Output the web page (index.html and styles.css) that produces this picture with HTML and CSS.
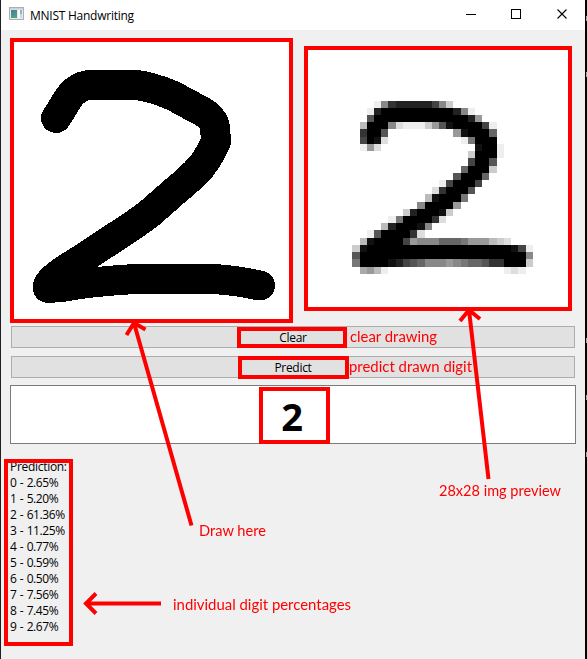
FILE: index.html
```
<!DOCTYPE html>
<html lang="en">
<head>
<meta charset="utf-8">
<title>MNIST Handwriting</title>
<link rel="stylesheet" href="styles.css">
</head>
<body>
<div class="window">
  <header class="titlebar">
    <svg class="app-icon" width="15" height="13" viewBox="0 0 15 13">
      <defs><linearGradient id="g" x2="0.4" y2="1"><stop offset="0" stop-color="#4a7aa5"/><stop offset="1" stop-color="#4fa37c"/></linearGradient></defs>
      <rect x=".5" y=".5" width="14" height="12" fill="#e8ebee" stroke="#a9afb5"/>
      <rect x="1" y="1" width="13" height="1.5" fill="#c9d0d6"/>
      <rect x="2" y="3" width="6" height="8" fill="url(#g)"/>
      <rect x="9" y="3" width="2" height="8" fill="#f9fafa"/>
      <rect x="11" y="3" width="2" height="4" fill="#8fb5b5"/>
      <rect x="11" y="7" width="2" height="4" fill="#c9dcda"/>
    </svg>
    <span class="title">MNIST Handwriting</span>
    <svg class="controls" width="119" height="30" viewBox="0 0 119 30" fill="none" stroke="#000">
      <path d="M0 14.5h10M45.500 9.500h9v9h-9z" shape-rendering="crispEdges"/>
      <path d="M91.500 9.500l9 9M100.500 9.500l-9 9" stroke-width="1.1"/>
    </svg>
  </header>
  <main class="content">
    <div class="images">
      <div class="pad">
        <svg width="275" height="277" viewBox="14 42 275 277" fill="none" stroke="#000" stroke-width="30" stroke-linecap="round" stroke-linejoin="round" shape-rendering="crispEdges">
          <path d="M56 118C64 107 67 97 75 91Q83 85 90 85H136L143 86Q165 91 179 99L203 112Q214 119 215 128L216 141Q211 154 201 167Q190 179 175 191L150 213Q142 219 135 224L82 259Q62 271 54 278Q47 284 48 288L62 287L80 284Q110 280 148 278.500H180L215 279L235 281L247 283L260 285.500"/>
        </svg>
      </div>
      <div class="preview"><canvas id="preview" width="260" height="257"></canvas></div>
    </div>
    <button class="btn">Clear</button>
    <button class="btn predict">Predict</button>
    <div class="result">2</div>
    <div class="scores">
      <div>Prediction:</div>
      <div>0 - 2.65%</div>
      <div>1 - 5.20%</div>
      <div>2 - 61.36%</div>
      <div>3 - 11.25%</div>
      <div>4 - 0.77%</div>
      <div>5 - 0.59%</div>
      <div>6 - 0.50%</div>
      <div>7 - 7.56%</div>
      <div>8 - 7.45%</div>
      <div>9 - 2.67%</div>
    </div>
  </main>
</div>
<svg class="annotations" width="587" height="659" viewBox="0 0 587 659">
  <g class="marks">
    <rect x="239" y="329" width="106" height="17"/>
    <rect x="240" y="358" width="107" height="19"/>
    <rect x="261" y="389" width="67" height="53"/>
    <rect x="6" y="461" width="65" height="183"/>
    <path d="M191.500 525.500L134 323M126.500 335L134 323L145.500 329.500"/>
    <path d="M488.500 479L469 310M460 321L469 310L480 319"/>
    <path d="M161 603.500H86M96 593.500L86 603.500L96 613.500"/>
  </g>
  <g class="notes">
    <text x="350" y="342" textLength="87" lengthAdjust="spacingAndGlyphs">clear drawing</text>
    <text x="349" y="372" textLength="123" lengthAdjust="spacingAndGlyphs">predict drawn digit</text>
    <text x="439" y="496" textLength="122" lengthAdjust="spacingAndGlyphs">28x28 img preview</text>
    <text x="199" y="536" textLength="67" lengthAdjust="spacingAndGlyphs">Draw here</text>
    <text x="173" y="610" textLength="178" lengthAdjust="spacingAndGlyphs">individual digit percentages</text>
  </g>
  <g fill="#aaa">
    <rect x="586" y="16" width="1" height="5"/><rect x="586" y="72" width="1" height="5"/>
    <rect x="586" y="338" width="1" height="5"/><rect x="586" y="395" width="1" height="5"/>
    <rect x="586" y="452" width="1" height="5"/>
  </g>
</svg>
<script src="preview.js"></script>
</body>
</html>
```
FILE: styles.css
```
* { box-sizing: border-box; }
body {
  margin: 0;
  width: 587px;
  height: 659px;
  overflow: hidden;
  position: relative;
  background: #000;
  font-family: "Open Sans", "Noto Sans", sans-serif;
  font-size: 12px;
  color: #000;
}
.window {
  height: 659px;
  margin: 0 2px 0 0;
  border-left: 1px solid #202024;
  background: #f0f0f0;
}
.titlebar {
  height: 30px;
  display: flex;
  align-items: center;
  background: #fff;
  padding-left: 8px;
}
.app-icon { margin-top: -3px; }
.title {
  margin-left: 6px;
  padding-top: 1px;
  letter-spacing: -0.25px;
  line-height: 16px;
}
.controls { margin-left: auto; }
.content {
  display: flex;
  flex-direction: column;
  padding: 8px 9px 0;
}
.images {
  display: flex;
  gap: 11px;
  align-items: flex-start;
  height: 288px;
}
.pad {
  width: 283px;
  height: 285px;
  border: 4px solid #f00;
  background: #fff;
}
.preview {
  width: 268px;
  height: 265px;
  margin-top: 8px;
  border: 4px solid #f00;
  background: #fff;
}
.pad svg, .preview canvas { display: block; }
.btn {
  height: 22px;
  margin: 0 1px 8px;
  padding: 2px 0 0;
  border: 1px solid #adadad;
  background: #e1e1e1;
  font: inherit;
  line-height: 18px;
  letter-spacing: -0.3px;
  color: #000;
}
.btn.predict { margin-bottom: 7px; }
.result {
  height: 59px;
  border: 1px solid #7a7a7a;
  background: #fff;
  text-align: center;
  font-size: 38px;
  font-weight: 700;
  line-height: 61px;
  padding-right: 2px;
}
.scores {
  margin-top: 15px;
  line-height: 16px;
  letter-spacing: -0.42px;
  word-spacing: 0.7px;
}
.scores div:first-child { letter-spacing: -0.3px; }
.annotations {
  position: absolute;
  left: 0;
  top: 0;
  pointer-events: none;
}
.marks {
  fill: none;
  stroke: #f00;
  stroke-width: 4;
}
.notes {
  fill: #f00;
  font-family: Lato, sans-serif;
  font-size: 14.5px;
}
```
FILE: preview.js
```
// Gray level of each preview cell, one hex digit per cell (0 black, f white).
const rows = [
  "fffe832222248cfffffffffff",
  "ffe2000000000028efffffff",
  "ff5000000000000029fffffff",
  "fb0008deeec95100004efffff",
  "f3005fffffffff910006fffff",
  "f401dffffffffffe7000fffff",
  "fe9dfffffffffffff100effff",
  "ffffffffffffffffc000effff",
  "ffffffffffffffff4005fffff",
  "fffffffffffffff6000cfffff",
  "ffffffffffffff50006ffffff",
  "ffffffffffffe40004fffffff",
  "fffffffffffd30005ffffffff",
  "ffffffffffb10007fffffffff",
  "fffffffff800009ffffffffff",
  "fffffffc20001cfffffffffff",
  "fffffe700003dffffffffffff",
  "ffffb200018ffffffffffffff",
  "ffe500003dfffffffffffffff",
  "fb10000498886667999bcdfff",
  "c10000000000000000000014e",
  "5000000000000000000000008",
  "700001245688898766533000c",
  "fa9beffffffffffffffffedef"
];
const step = 7.217;
const ctx = document.getElementById("preview").getContext("2d");
const edgeX = i => Math.round(352.35 + i * step) - 308;
const edgeY = i => Math.round(100.58 + i * step) - 50;
rows.forEach((row, y) => {
  [...row].forEach((digit, x) => {
    if (digit === "f") return;
    const v = parseInt(digit, 16) * 17;
    ctx.fillStyle = `rgb(${v},${v},${v})`;
    ctx.fillRect(edgeX(x), edgeY(y), edgeX(x + 1) - edgeX(x), edgeY(y + 1) - edgeY(y));
  });
});
```
